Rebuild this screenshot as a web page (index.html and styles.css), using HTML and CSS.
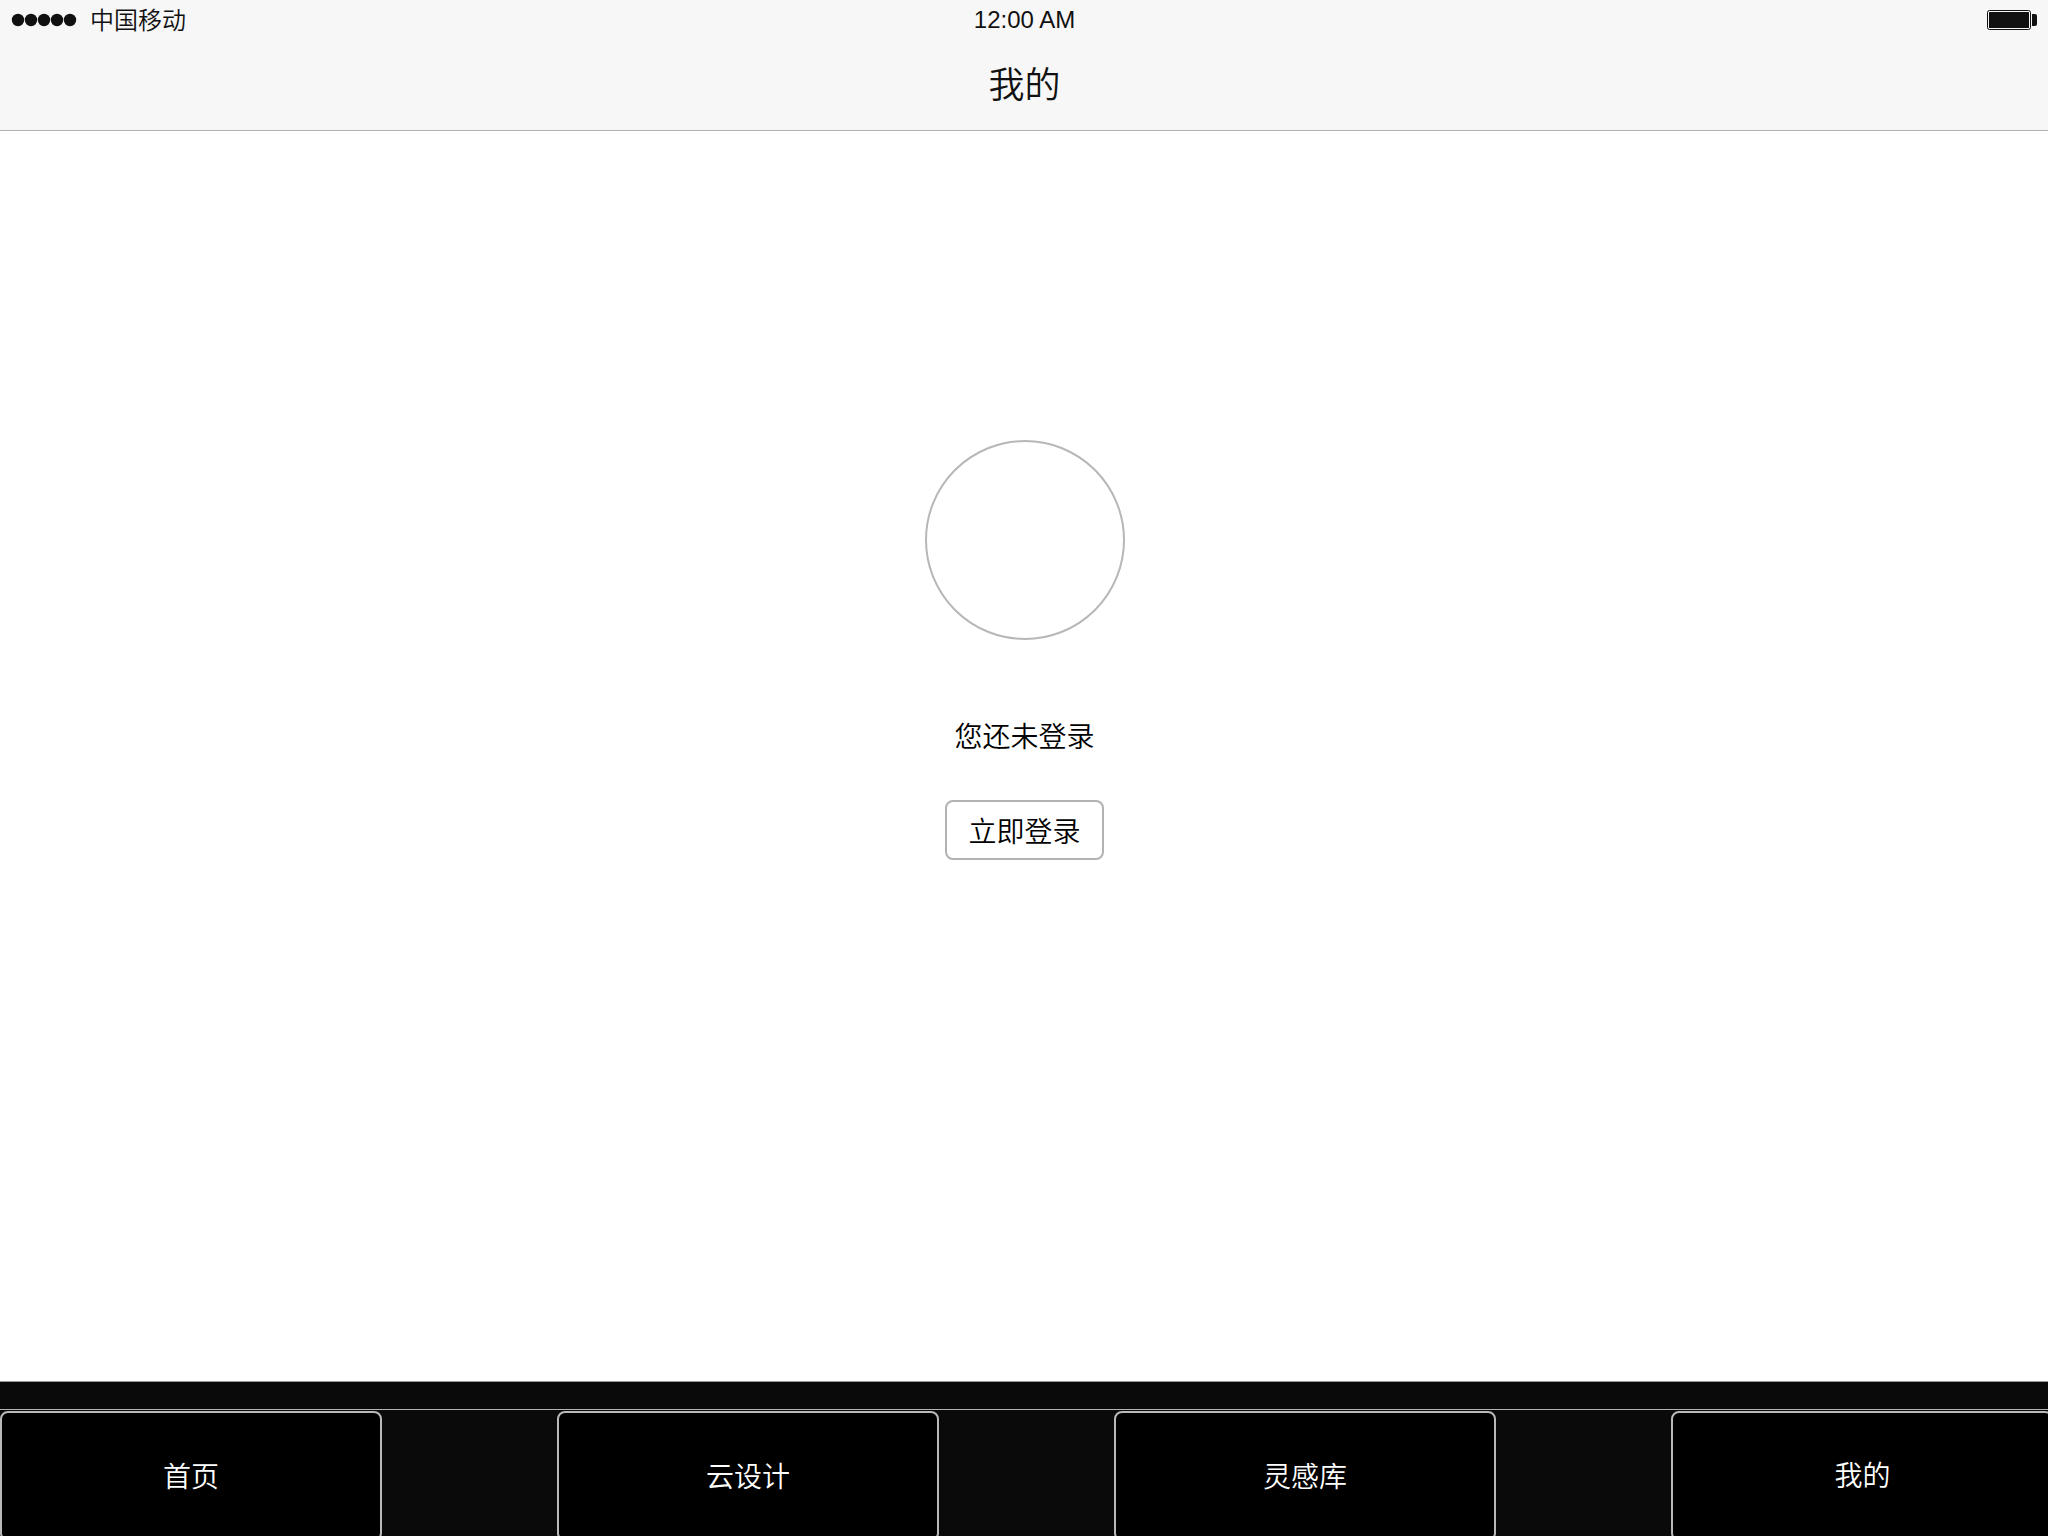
FILE: index.html
```html
<!DOCTYPE html>
<html lang="zh-CN">
<head>
<meta charset="utf-8">
<title>我的</title>
<link rel="stylesheet" href="styles.css">
</head>
<body>
<div class="screen">
  <header class="header">
    <div class="status">
      <div class="carrier">
        <svg class="signal" width="66" height="14" viewBox="0 0 66 14" fill="#111"><circle cx="6" cy="7" r="6.2"/><circle cx="19" cy="7" r="6.2"/><circle cx="32" cy="7" r="6.2"/><circle cx="45" cy="7" r="6.2"/><circle cx="58" cy="7" r="6.2"/></svg>
        <span class="carrier-name">中国移动</span>
      </div>
      <time class="clock">12:00 AM</time>
      <svg class="battery" width="50" height="20" viewBox="0 0 50 20"><rect x=".5" y=".5" width="43" height="19" rx="2" fill="none" stroke="#111"/><rect x="2" y="2" width="40" height="16" rx=".5" fill="#111"/><path d="M45 4h3q2 0 2 2v8q0 2-2 2h-3z" fill="#111"/></svg>
    </div>
    <h1 class="title">我的</h1>
  </header>
  <main class="profile">
    <div class="avatar"></div>
    <p class="message">您还未登录</p>
    <button class="login" type="button">立即登录</button>
  </main>
  <footer class="footer">
    <div class="strip"></div>
    <nav class="tabs">
      <a class="tab">首页</a>
      <a class="tab">云设计</a>
      <a class="tab">灵感库</a>
      <a class="tab tab-current">我的</a>
    </nav>
  </footer>
</div>
</body>
</html>
```
FILE: styles.css
```css
* { box-sizing: border-box; }
body {
  margin: 0;
  color: #111;
  font-family: "Liberation Sans", "Noto Sans CJK SC", sans-serif;
}
.screen {
  display: flex;
  flex-direction: column;
  width: 2048px;
  height: 1536px;
  overflow: hidden;
  background: #fff;
}
.header {
  height: 131px;
  background: #f7f7f7;
  border-bottom: 1px solid #b2b2b2;
}
.status {
  display: grid;
  grid-template-columns: 1fr auto 1fr;
  align-items: center;
  height: 40px;
  padding: 0 11px 0 12px;
  font-size: 24px;
  line-height: 36px;
}
.carrier {
  display: flex;
  align-items: center;
  gap: 12px;
  font-family: "Noto Sans CJK SC", sans-serif;
  font-weight: 350;
}
.carrier-name { padding-bottom: 2px; line-height: 34px; }
.signal { display: block; overflow: visible; }
.clock { line-height: 40px; }
.battery { justify-self: end; }
.title {
  margin: 0;
  padding-left: 1px;
  font: 350 36px/84px "Noto Sans CJK SC", sans-serif;
  text-align: center;
}
.profile {
  flex: 1;
  display: flex;
  flex-direction: column;
  align-items: center;
  padding: 309px 0 0 1px;
  color: #000;
  font: 350 28px/40px "Noto Sans CJK SC", sans-serif;
}
.avatar {
  width: 200px;
  height: 200px;
  border: 2px solid #b7b7b7;
  border-radius: 50%;
}
.message { margin: 75px 0 45px; }
.login {
  width: 159px;
  height: 60px;
  padding: 0 0 1px;
  border: 2px solid #b2b2b2;
  border-radius: 8px;
  background: #fff;
  color: inherit;
  font: inherit;
}
.footer {
  height: 155px;
  border-top: 1px solid #999;
  background: #0a0a0a;
}
.strip {
  height: 28px;
  border-bottom: 1px solid #b2b2b2;
}
.tabs {
  display: flex;
  justify-content: space-between;
  width: 2053px;
  padding-top: 1px;
}
.tab {
  width: 382px;
  height: 130px;
  border: 2px solid #b9b9b9;
  border-radius: 8px;
  background: #000;
  color: #fff;
  font: 350 28px/124px "Noto Sans CJK SC", sans-serif;
  text-align: center;
}
.tab-current { padding-left: 1px; line-height: 122px; }
```
